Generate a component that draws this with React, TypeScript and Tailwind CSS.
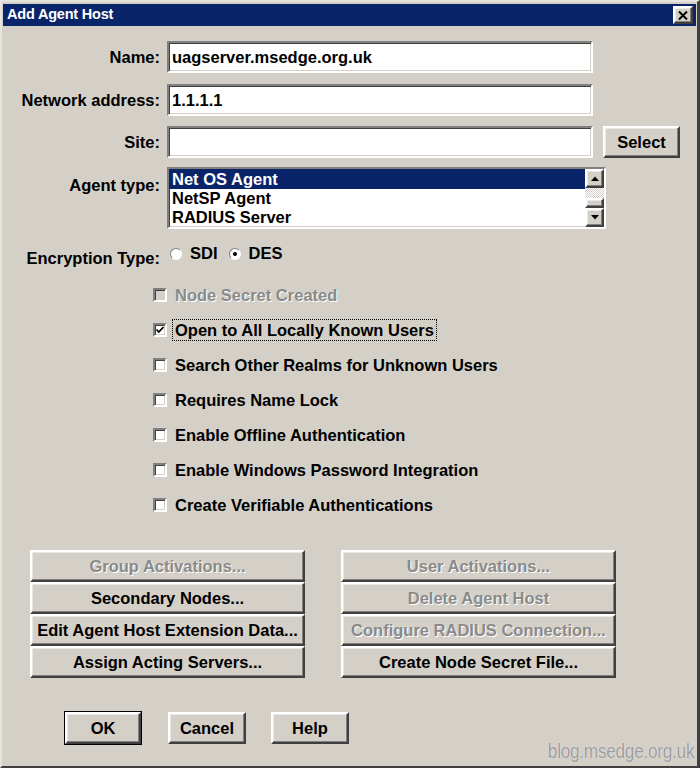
import React from "react";

const sunken =
  "border-2 border-t-[#808080] border-l-[#808080] border-b-white border-r-white shadow-[inset_1px_1px_0_#404040,inset_-1px_-1px_0_#d4d0c8]";
const raised =
  "border-2 border-t-white border-l-white border-b-[#404040] border-r-[#404040] shadow-[inset_-1px_-1px_0_#808080,inset_1px_1px_0_#e8e8e8] bg-[#d4d0c8]";

function Label({ children, className = "" }: { children: React.ReactNode; className?: string }) {
  return <div className={`w-[159px] shrink-0 text-right pr-[1px] ${className}`}>{children}</div>;
}

function Input({ value }: { value: string }) {
  return (
    <div className={`ml-[6px] w-[426px] h-[32px] bg-white ${sunken} flex items-center pl-[3px]`}>
      <span>{value}</span>
    </div>
  );
}

function Check({ checked, disabled }: { checked?: boolean; disabled?: boolean }) {
  return (
    <div
      className={`w-[14px] h-[14px] ${sunken} ${disabled ? "bg-[#d4d0c8]" : "bg-white"} flex items-center justify-center shrink-0`}
    >
      {checked && (
        <svg width="8" height="8" viewBox="0 0 8 8">
          <path d="M0.5 3.5 L2.8 6 L7.5 1" stroke="#000" strokeWidth="1.8" fill="none" />
        </svg>
      )}
    </div>
  );
}

function CheckRow({
  label,
  checked,
  disabled,
  focused,
}: {
  label: string;
  checked?: boolean;
  disabled?: boolean;
  focused?: boolean;
}) {
  return (
    <div className="h-[22px] flex items-center pl-[151px]">
      <Check checked={checked} disabled={disabled} />
      <span
        className={`ml-[5px] px-[2px] leading-[20px] ${
          focused ? "border border-dotted border-black" : "border border-transparent"
        } ${disabled ? "text-[#8a8a8a] [text-shadow:1px_1px_0_#fff]" : ""}`}
      >
        {label}
      </span>
    </div>
  );
}

function Radio({ checked }: { checked?: boolean }) {
  return (
    <div className="w-[12px] h-[12px] rounded-full border border-t-[#808080] border-l-[#808080] border-b-white border-r-white bg-white flex items-center justify-center shrink-0">
      {checked && <div className="w-[4px] h-[4px] rounded-full bg-black" />}
    </div>
  );
}

function Btn({ label, disabled, className = "" }: { label: string; disabled?: boolean; className?: string }) {
  return (
    <div className={`${raised} h-[32px] flex items-center justify-center ${className}`}>
      <span className={disabled ? "text-[#8a8a8a] [text-shadow:1px_1px_0_#fff]" : "text-black"}>{label}</span>
    </div>
  );
}

function Arrow({ up }: { up?: boolean }) {
  return (
    <div className={`${raised} w-[19px] h-[19px] flex items-center justify-center`}>
      <svg width="8" height="5" viewBox="0 0 8 5">
        {up ? <path d="M0 5 L4 0.5 L8 5 Z" fill="#000" /> : <path d="M0 0 L4 4.5 L8 0 Z" fill="#000" />}
      </svg>
    </div>
  );
}

export default function App() {
  return (
    <div className="w-[700px] h-[768px] bg-[#d4d0c8] border-l-[2px] border-t-[2px] border-l-[#e6e4df] border-t-[#e6e4df] border-r-[3px] border-b-[2px] border-r-[#404040] border-b-[#404040] relative flex flex-col font-['Liberation_Sans',Arial,sans-serif] font-bold text-[16.5px] text-black overflow-hidden">
      {/* Title bar */}
      <div className="mx-[1px] mt-[2px] h-[22px] bg-[#0a246a] flex items-center justify-between pl-[4px] pr-[3px]">
        <span className="text-white text-[14.5px] font-bold tracking-[-0.2px]">Add Agent Host</span>
        <div className={`${raised} w-[20px] h-[18px] flex items-center justify-center`}>
          <svg width="10" height="9" viewBox="0 0 10 9">
            <path d="M1 0.5 L9 8.5 M9 0.5 L1 8.5" stroke="#000" strokeWidth="2" />
          </svg>
        </div>
      </div>

      {/* Name */}
      <div className="flex items-center mt-[15px]">
        <Label>Name:</Label>
        <Input value="uagserver.msedge.org.uk" />
      </div>
      <div className="flex items-center mt-[11px]">
        <Label>Network address:</Label>
        <Input value="1.1.1.1" />
      </div>
      <div className="flex items-center mt-[10px]">
        <Label>Site:</Label>
        <Input value="" />
        <Btn label="Select" className="ml-[10px] w-[77px] h-[31px]" />
      </div>

      {/* Agent type */}
      <div className="flex items-start mt-[9px]">
        <Label className="pt-[6px]">Agent type:</Label>
        <div className={`ml-[6px] w-[439px] h-[62px] bg-white ${sunken} flex`}>
          <div className="flex-1 flex flex-col leading-[19px]">
            <div className="h-[20px] bg-[#0a246a] text-white pl-[3px] flex items-center">Net OS Agent</div>
            <div className="h-[19px] pl-[3px] flex items-center">NetSP Agent</div>
            <div className="h-[19px] pl-[3px] flex items-center">RADIUS Server</div>
          </div>
          <div className="w-[19px] flex flex-col">
            <Arrow up />
            <div className="h-[11px] bg-[repeating-conic-gradient(#d4d0c8_0_25%,#ffffff_0_50%)] bg-[length:2px_2px]" />
            <div className={`${raised} h-[10px]`} />
            <Arrow />
          </div>
        </div>
      </div>

      {/* Encryption */}
      <div className="flex items-center mt-[15px] h-[22px]">
        <Label className="pt-[6px]">Encryption Type:</Label>
        <div className="ml-[9px] flex items-center -mt-[3px]">
          <Radio />
          <span className="ml-[8px]">SDI</span>
          <div className="ml-[11px]">
            <Radio checked />
          </div>
          <span className="ml-[8px]">DES</span>
        </div>
      </div>

      {/* Checkboxes */}
      <div className="flex flex-col gap-[13px] mt-[18px]">
        <CheckRow label="Node Secret Created" disabled />
        <CheckRow label="Open to All Locally Known Users" checked focused />
        <CheckRow label="Search Other Realms for Unknown Users" />
        <CheckRow label="Requires Name Lock" />
        <CheckRow label="Enable Offline Authentication" />
        <CheckRow label="Enable Windows Password Integration" />
        <CheckRow label="Create Verifiable Authentications" />
      </div>

      {/* Action buttons */}
      <div className="grid grid-cols-[275px_275px] gap-x-[36px] ml-[28px] mt-[34px]">
        <Btn label="Group Activations..." disabled />
        <Btn label="User Activations..." disabled />
        <Btn label="Secondary Nodes..." />
        <Btn label="Delete Agent Host" disabled />
        <Btn label="Edit Agent Host Extension Data..." />
        <Btn label="Configure RADIUS Connection..." disabled />
        <Btn label="Assign Acting Servers..." />
        <Btn label="Create Node Secret File..." />
      </div>

      {/* Bottom buttons */}
      <div className="flex items-center ml-[62px] mt-[33px]">
        <div className="border border-black">
          <Btn label="OK" className="w-[76px] h-[30px]" />
        </div>
        <Btn label="Cancel" className="ml-[26px] w-[78px] h-[31px]" />
        <Btn label="Help" className="ml-[25px] w-[78px] h-[31px]" />
      </div>

      <div className="absolute right-[3px] bottom-[0px] origin-right scale-x-[0.86] font-['Liberation_Sans',sans-serif] font-normal text-[20px] text-[#9c9c9c] [text-shadow:0_0_1px_#ffffff] tracking-[-0.3px]">
        blog.msedge.org.uk
      </div>
    </div>
  );
}
